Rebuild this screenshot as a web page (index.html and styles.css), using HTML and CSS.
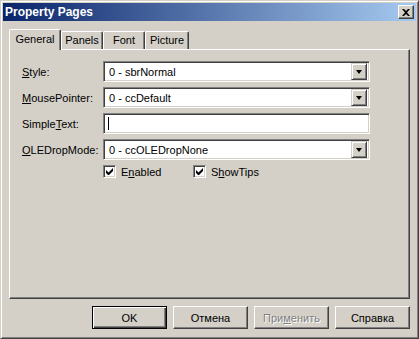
FILE: index.html
```html
<!DOCTYPE html>
<html lang="ru">
<head>
  <meta charset="UTF-8">
  <title>Property Pages</title>
  <link rel="stylesheet" href="styles.css">
</head>
<body>
  <div class="window">
    <!-- title bar -->
    <div class="titlebar">
      <span class="title">Property Pages</span>
      <button class="close">
        <svg width="8" height="7" viewBox="0 0 8 7"><path d="M0 0h2l2 2 2-2h2L5 3.5 8 7H6L4 5 2 7H0l3-3.5z" fill="#000"/></svg>
      </button>
    </div>

    <div class="body">
      <!-- tabs -->
      <div class="tabs">
        <div class="tab active">General</div>
        <div class="tab">Panels</div>
        <div class="tab">Font</div>
        <div class="tab wide">Picture</div>
      </div>

      <div class="panel">
        <div class="row">
          <label><u>S</u>tyle:</label>
          <div class="field"><span class="value">0 - sbrNormal</span><span class="drop"></span></div>
        </div>
        <div class="row">
          <label><u>M</u>ousePointer:</label>
          <div class="field"><span class="value">0 - ccDefault</span><span class="drop"></span></div>
        </div>
        <div class="row">
          <label>Simple<u>T</u>ext:</label>
          <div class="field"><span class="caret"></span></div>
        </div>
        <div class="row">
          <label><u>O</u>LEDropMode:</label>
          <div class="field"><span class="value">0 - ccOLEDropNone</span><span class="drop"></span></div>
        </div>
        <div class="checks">
          <div class="check">
            <span class="box"><svg width="7" height="7" viewBox="0 0 7 7"><path d="M0 2v3l2 2h1l4-4V0L2.5 4.5z" fill="#000"/></svg></span>
            <span>E<u>n</u>abled</span>
          </div>
          <div class="check">
            <span class="box"><svg width="7" height="7" viewBox="0 0 7 7"><path d="M0 2v3l2 2h1l4-4V0L2.5 4.5z" fill="#000"/></svg></span>
            <span>S<u>h</u>owTips</span>
          </div>
        </div>
      </div>

      <!-- dialog buttons -->
      <div class="buttons">
        <button class="btn default">OK</button>
        <button class="btn">Отмена</button>
        <button class="btn disabled">При<u>м</u>енить</button>
        <button class="btn">Справка</button>
      </div>
    </div>
  </div>
</body>
</html>
```

FILE: styles.css
```css
body {
  margin: 0;
  font: 11px "Liberation Sans", Arial, sans-serif;
  color: #000;
}

.window {
  width: 419px;
  height: 339px;
  box-sizing: border-box;
  background: #d4d0c8;
  border: 1px solid;
  border-color: #d4d0c8 #404040 #404040 #d4d0c8;
  box-shadow: inset 1px 1px #fff, inset -1px -1px #808080;
  padding: 2px;
  display: flex;
  flex-direction: column;
}

.titlebar {
  height: 18px;
  background: linear-gradient(to right, #0a246a, #a6caf0);
  display: flex;
  align-items: center;
  justify-content: space-between;
  padding: 0 2px;
}

.title {
  color: #fff;
  font-weight: bold;
  font-size: 12px;
}

.close {
  width: 16px;
  height: 14px;
  padding: 0;
  box-sizing: border-box;
  background: #d4d0c8;
  border: 1px solid;
  border-color: #fff #404040 #404040 #fff;
  box-shadow: inset -1px -1px #808080;
  display: flex;
  align-items: center;
  justify-content: center;
}

.body {
  flex: 1;
  padding: 8px 6px 0 6px;
  display: flex;
  flex-direction: column;
}

/* tabs */
.tabs {
  display: flex;
  align-items: flex-end;
  height: 20px;
}

.tab {
  width: 42px;
  height: 18px;
  box-sizing: border-box;
  border: 1px solid;
  border-bottom: 0;
  border-color: #fff #404040 #fff #fff;
  box-shadow: inset -1px 0 #808080;
  border-radius: 2px 2px 0 0;
  display: flex;
  align-items: center;
  justify-content: center;
  padding-bottom: 1px;
}

.tab.wide {
  width: 44px;
}

.tab.active {
  width: 52px;
  height: 21px;
  margin-bottom: -1px;
  position: relative;
  z-index: 1;
  background: #d4d0c8;
  padding-bottom: 3px;
}

.panel {
  height: 250px;
  box-sizing: border-box;
  border: 1px solid;
  border-color: #fff #404040 #404040 #fff;
  box-shadow: inset -1px -1px #808080;
  padding: 11px 0 0 12px;
}

.row {
  display: flex;
  align-items: center;
  height: 21px;
  margin-bottom: 5px;
}

.row label {
  width: 81px;
}

.field {
  width: 267px;
  height: 21px;
  box-sizing: border-box;
  background: #fff;
  border: 1px solid;
  border-color: #808080 #fff #fff #808080;
  box-shadow: inset 1px 1px #404040, inset -1px -1px #d4d0c8;
  padding: 2px;
  display: flex;
  align-items: center;
}

.value {
  padding-left: 3px;
}

.caret {
  width: 1px;
  height: 13px;
  margin-left: 2px;
  background: #000;
}

.drop {
  width: 16px;
  height: 17px;
  margin-left: auto;
  box-sizing: border-box;
  background: #d4d0c8;
  border: 1px solid;
  border-color: #d4d0c8 #404040 #404040 #d4d0c8;
  box-shadow: inset 1px 1px #fff, inset -1px -1px #808080;
  display: flex;
  align-items: center;
  justify-content: center;
}

.drop::after {
  content: "";
  border-left: 3.5px solid transparent;
  border-right: 3.5px solid transparent;
  border-top: 4px solid #000;
}

/* checkboxes */
.checks {
  display: flex;
  margin: 3px 0 0 81px;
}

.check {
  width: 90px;
  display: flex;
  align-items: center;
  gap: 5px;
}

.box {
  width: 13px;
  height: 13px;
  box-sizing: border-box;
  background: #fff;
  border: 1px solid;
  border-color: #808080 #fff #fff #808080;
  box-shadow: inset 1px 1px #404040, inset -1px -1px #d4d0c8;
  display: flex;
  align-items: center;
  justify-content: center;
}

/* buttons */
.buttons {
  display: flex;
  justify-content: flex-end;
  gap: 6px;
  padding-top: 7px;
}

.btn {
  width: 75px;
  height: 23px;
  box-sizing: border-box;
  font: inherit;
  font-weight: normal;
  color: #000;
  background: #d4d0c8;
  border: 1px solid;
  border-color: #fff #404040 #404040 #fff;
  box-shadow: inset -1px -1px #808080;
  padding: 0;
}

.btn.default {
  border-color: #000;
  box-shadow: inset 1px 1px #fff, inset -1px -1px #404040, inset -2px -2px #808080;
}

.btn.disabled {
  color: #808080;
  text-shadow: 1px 1px #fff;
}
```
